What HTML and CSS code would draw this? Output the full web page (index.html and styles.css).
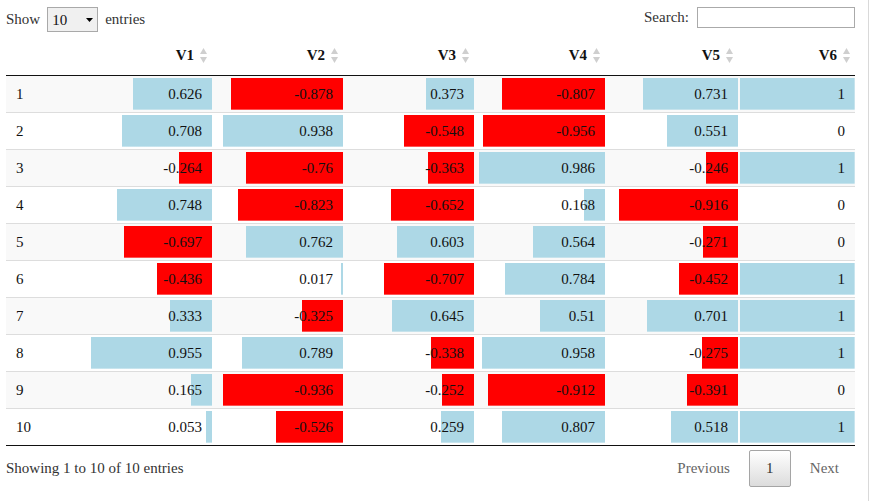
FILE: index.html
```html
<!DOCTYPE html>
<html>
<head>
<meta charset="utf-8">
<link rel="stylesheet" href="styles.css">
</head>
<body>
<div class="frame">
  <div class="topbar">
    <div class="length">
      <span>Show</span>
      <span class="selectwrap">
        <select class="sel"><option>10</option></select>
        <svg class="selarrow" width="7" height="4" viewBox="0 0 7 4"><polygon points="0,0 7,0 3.5,4" fill="#000"/></svg>
      </span>
      <span>entries</span>
    </div>
    <div class="filter">
      <span>Search:</span>
      <input class="search" type="text">
    </div>
  </div>
  <table class="dt">
    <colgroup>
      <col class="c0"><col class="c1"><col class="c2"><col class="c3"><col class="c4"><col class="c5"><col class="c6">
    </colgroup>
    <thead>
      <tr>
        <th class="rn"></th>
        <th><div class="hd">V1<svg class="sort" width="7" height="15" viewBox="0 0 7 15"><polygon points="3.5,0 7,6 0,6"/><polygon points="0,9 7,9 3.5,15"/></svg></div></th>
        <th><div class="hd">V2<svg class="sort" width="7" height="15" viewBox="0 0 7 15"><polygon points="3.5,0 7,6 0,6"/><polygon points="0,9 7,9 3.5,15"/></svg></div></th>
        <th><div class="hd">V3<svg class="sort" width="7" height="15" viewBox="0 0 7 15"><polygon points="3.5,0 7,6 0,6"/><polygon points="0,9 7,9 3.5,15"/></svg></div></th>
        <th><div class="hd">V4<svg class="sort" width="7" height="15" viewBox="0 0 7 15"><polygon points="3.5,0 7,6 0,6"/><polygon points="0,9 7,9 3.5,15"/></svg></div></th>
        <th><div class="hd">V5<svg class="sort" width="7" height="15" viewBox="0 0 7 15"><polygon points="3.5,0 7,6 0,6"/><polygon points="0,9 7,9 3.5,15"/></svg></div></th>
        <th><div class="hd">V6<svg class="sort" width="7" height="15" viewBox="0 0 7 15"><polygon points="3.5,0 7,6 0,6"/><polygon points="0,9 7,9 3.5,15"/></svg></div></th>
      </tr>
    </thead>
    <tbody>
      <tr>
        <td class="rn">1</td>
        <td class="bar pos" style="--w:62.6%">0.626</td>
        <td class="bar neg" style="--w:87.8%">-0.878</td>
        <td class="bar pos" style="--w:37.3%">0.373</td>
        <td class="bar neg" style="--w:80.7%">-0.807</td>
        <td class="bar pos" style="--w:73.1%">0.731</td>
        <td class="bar pos" style="--w:100%">1</td>
      </tr>
      <tr>
        <td class="rn">2</td>
        <td class="bar pos" style="--w:70.8%">0.708</td>
        <td class="bar pos" style="--w:93.8%">0.938</td>
        <td class="bar neg" style="--w:54.8%">-0.548</td>
        <td class="bar neg" style="--w:95.6%">-0.956</td>
        <td class="bar pos" style="--w:55.1%">0.551</td>
        <td class="bar pos" style="--w:0%">0</td>
      </tr>
      <tr>
        <td class="rn">3</td>
        <td class="bar neg" style="--w:26.4%">-0.264</td>
        <td class="bar neg" style="--w:76%">-0.76</td>
        <td class="bar neg" style="--w:36.3%">-0.363</td>
        <td class="bar pos" style="--w:98.6%">0.986</td>
        <td class="bar neg" style="--w:24.6%">-0.246</td>
        <td class="bar pos" style="--w:100%">1</td>
      </tr>
      <tr>
        <td class="rn">4</td>
        <td class="bar pos" style="--w:74.8%">0.748</td>
        <td class="bar neg" style="--w:82.3%">-0.823</td>
        <td class="bar neg" style="--w:65.2%">-0.652</td>
        <td class="bar pos" style="--w:16.8%">0.168</td>
        <td class="bar neg" style="--w:91.6%">-0.916</td>
        <td class="bar pos" style="--w:0%">0</td>
      </tr>
      <tr>
        <td class="rn">5</td>
        <td class="bar neg" style="--w:69.7%">-0.697</td>
        <td class="bar pos" style="--w:76.2%">0.762</td>
        <td class="bar pos" style="--w:60.3%">0.603</td>
        <td class="bar pos" style="--w:56.4%">0.564</td>
        <td class="bar neg" style="--w:27.1%">-0.271</td>
        <td class="bar pos" style="--w:0%">0</td>
      </tr>
      <tr>
        <td class="rn">6</td>
        <td class="bar neg" style="--w:43.6%">-0.436</td>
        <td class="bar pos" style="--w:1.7%">0.017</td>
        <td class="bar neg" style="--w:70.7%">-0.707</td>
        <td class="bar pos" style="--w:78.4%">0.784</td>
        <td class="bar neg" style="--w:45.2%">-0.452</td>
        <td class="bar pos" style="--w:100%">1</td>
      </tr>
      <tr>
        <td class="rn">7</td>
        <td class="bar pos" style="--w:33.3%">0.333</td>
        <td class="bar neg" style="--w:32.5%">-0.325</td>
        <td class="bar pos" style="--w:64.5%">0.645</td>
        <td class="bar pos" style="--w:51%">0.51</td>
        <td class="bar pos" style="--w:70.1%">0.701</td>
        <td class="bar pos" style="--w:100%">1</td>
      </tr>
      <tr>
        <td class="rn">8</td>
        <td class="bar pos" style="--w:95.5%">0.955</td>
        <td class="bar pos" style="--w:78.9%">0.789</td>
        <td class="bar neg" style="--w:33.8%">-0.338</td>
        <td class="bar pos" style="--w:95.8%">0.958</td>
        <td class="bar neg" style="--w:27.5%">-0.275</td>
        <td class="bar pos" style="--w:100%">1</td>
      </tr>
      <tr>
        <td class="rn">9</td>
        <td class="bar pos" style="--w:16.5%">0.165</td>
        <td class="bar neg" style="--w:93.6%">-0.936</td>
        <td class="bar neg" style="--w:25.2%">-0.252</td>
        <td class="bar neg" style="--w:91.2%">-0.912</td>
        <td class="bar neg" style="--w:39.1%">-0.391</td>
        <td class="bar pos" style="--w:0%">0</td>
      </tr>
      <tr>
        <td class="rn">10</td>
        <td class="bar pos" style="--w:5.3%">0.053</td>
        <td class="bar neg" style="--w:52.6%">-0.526</td>
        <td class="bar pos" style="--w:25.9%">0.259</td>
        <td class="bar pos" style="--w:80.7%">0.807</td>
        <td class="bar pos" style="--w:51.8%">0.518</td>
        <td class="bar pos" style="--w:100%">1</td>
      </tr>
    </tbody>
  </table>
  <div class="footer">
    <div class="info">Showing 1 to 10 of 10 entries</div>
    <div class="paginate">
      <span class="pbtn disabled">Previous</span>
      <span class="pbtn current">1</span>
      <span class="pbtn disabled">Next</span>
    </div>
  </div>
</div>
</body>
</html>
```
FILE: styles.css
```css
html, body {
  margin: 0;
  padding: 0;
  background: #fff;
}
body {
  font-family: "Liberation Serif", "Times New Roman", serif;
  font-size: 15px;
  color: #333;
}
.frame {
  box-sizing: border-box;
  width: 869px;
  height: 501px;
  padding: 0 13px 0 6px;
  border-right: 1px solid #d9d9d9;
}
.topbar {
  display: flex;
  justify-content: space-between;
  align-items: flex-start;
  height: 35px;
  box-sizing: border-box;
  padding-top: 7px;
}
.length {
  display: flex;
  align-items: center;
  gap: 7px;
}
.selectwrap {
  position: relative;
  display: inline-block;
  height: 25px;
}
.sel {
  -webkit-appearance: none;
  appearance: none;
  box-sizing: border-box;
  width: 51px;
  height: 25px;
  margin: 0;
  padding: 0 0 0 4px;
  border: 1px solid #a9a9a9;
  border-radius: 0;
  background: #f0f0f0;
  font-family: "Liberation Serif", "Times New Roman", serif;
  font-size: 15px;
  color: #111;
  outline: none;
}
.selarrow {
  position: absolute;
  left: 39px;
  top: 11px;
}
.filter {
  display: flex;
  align-items: center;
  gap: 8px;
}
.search {
  box-sizing: border-box;
  width: 158px;
  height: 21px;
  margin: 0;
  padding: 0 3px;
  border: 1px solid #aaa;
  border-radius: 0;
  background: #fff;
  outline: none;
}
.dt {
  width: 849px;
  table-layout: fixed;
  border-collapse: separate;
  border-spacing: 0;
  color: #111;
}
.c0 { width: 76px; }
.c1 { width: 130px; }
.c2 { width: 131px; }
.c3 { width: 131px; }
.c4 { width: 131px; }
.c5 { width: 133px; }
.c6 { width: 117px; }
.dt th {
  padding: 10px 5px 10px 10px;
  line-height: 20px;
  font-weight: bold;
  text-align: right;
  border-bottom: 1px solid #111;
  color: #111;
}
.hd {
  display: flex;
  justify-content: flex-end;
  align-items: center;
  gap: 6px;
}
.sort {
  fill: #cfcfcf;
  margin-top: 1px;
}
.dt td {
  padding: 8px 10px;
  line-height: 20px;
  text-align: right;
  white-space: nowrap;
}
.dt td.rn {
  text-align: left;
}
.dt tbody tr + tr td {
  border-top: 1px solid #ddd;
}
.dt tbody tr:nth-child(odd) td {
  background-color: #f9f9f9;
}
.dt tbody tr:last-child td {
  border-bottom: 1px solid #111;
}
.bar {
  background-image: linear-gradient(90deg, transparent calc(100% - var(--w)), var(--c) calc(100% - var(--w)));
  background-size: 98% 88%;
  background-position: right center;
  background-repeat: no-repeat;
  background-origin: padding-box;
  background-clip: padding-box;
}
.pos { --c: #add8e6; }
.neg { --c: #ff0000; }
.footer {
  display: flex;
  justify-content: space-between;
  align-items: center;
  padding-top: 4px;
}
.info {
  color: #333;
}
.paginate {
  display: flex;
  align-items: center;
}
.pbtn {
  box-sizing: border-box;
  height: 37px;
  line-height: 35px;
  padding: 0 15px;
  border: 1px solid transparent;
  color: #666;
}
.pbtn.current {
  width: 42px;
  padding: 0;
  margin: 0 3px;
  text-align: center;
  color: #333;
  border: 1px solid #a5a5a5;
  border-radius: 2px;
  background: linear-gradient(to bottom, #ffffff 0%, #dcdcdc 100%);
}
```
